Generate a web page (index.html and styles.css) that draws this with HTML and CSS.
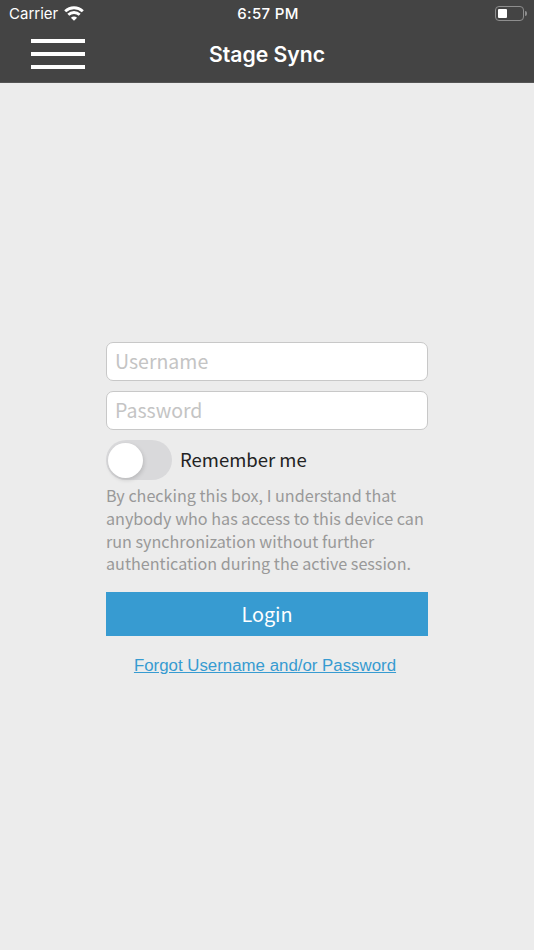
FILE: index.html
```html
<!DOCTYPE html>
<html lang="en">
<head>
    <meta charset="UTF-8">
    <meta name="viewport" content="width=device-width, initial-scale=1">
    <title>Stage Sync</title>
    <link rel="stylesheet" href="styles.css">
</head>
<body>
<header>
    <div class="status-bar">
        <div class="carrier">
            <span>Carrier</span>
            <svg class="wifi" width="20" height="15" viewBox="0 0 20 15" fill="none" stroke="#fff" stroke-width="2.9">
                <path d="M1.2 5.2C6.2 .6 13.8 .6 18.8 5.2"/>
                <path d="M4.3 8.8C7.6 5.8 12.4 5.8 15.7 8.8"/>
                <path d="M10 14.8L6.9 11.8Q10 9.2 13.1 11.8Z" fill="#fff" stroke="none"/>
            </svg>
        </div>
        <div class="time">6:57 PM</div>
        <div class="battery">
            <div class="battery-body"><div class="battery-level"></div></div>
            <div class="battery-tip"></div>
        </div>
    </div>
    <div class="nav-bar">
        <button class="menu-btn" aria-label="Menu">
            <span></span>
            <span></span>
            <span></span>
        </button>
        <h1>Stage Sync</h1>
    </div>
</header>

<form class="login-form">
    <input type="text" placeholder="Username">
    <input type="password" placeholder="Password">
    <label class="remember">
        <span class="switch"><span class="knob"></span></span>
        <span class="remember-text">Remember me</span>
    </label>
    <p class="notice">
        By checking this box, I understand that<br>
        anybody who has access to this device can<br>
        run synchronization without further<br>
        authentication during the active session.
    </p>
    <button type="button" class="login-btn">Login</button>
    <a class="forgot" href="#">Forgot Username and/or Password</a>
</form>
</body>
</html>
```
FILE: styles.css
```css
* {
    margin: 0;
    padding: 0;
    box-sizing: border-box;
}

body {
    height: 100vh;
    overflow: hidden;
    background: #ececec;
    font-family: "Noto Sans CJK SC", sans-serif;
}

/* header */
header {
    height: 83px;
    background: #444;
    border-bottom: 1px solid #555;
    color: #fff;
    font-family: Inter, sans-serif;
}

.status-bar {
    display: grid;
    grid-template-columns: 1fr auto 1fr;
    align-items: center;
    height: 27px;
    padding: 0 7px 0 9px;
    font-size: 15px;
}

.carrier {
    display: flex;
    align-items: center;
    gap: 6px;
}

.wifi {
    margin-top: -1px;
}

.time {
    font-weight: 500;
    letter-spacing: 0.35px;
}

.battery {
    display: flex;
    justify-content: flex-end;
    align-items: center;
    gap: 1px;
}

.battery-body {
    width: 29px;
    height: 15px;
    padding: 2px;
    border: 1px solid #8e8e8e;
    border-radius: 4px;
}

.battery-level {
    width: 9px;
    height: 9px;
    border-radius: 1px;
    background: #fff;
}

.battery-tip {
    width: 2px;
    height: 5px;
    border-radius: 0 2px 2px 0;
    background: #8e8e8e;
}

.nav-bar {
    display: grid;
    grid-template-columns: 1fr auto 1fr;
    align-items: center;
    height: 54px;
}

.menu-btn {
    display: flex;
    flex-direction: column;
    gap: 9px;
    width: 54px;
    margin-left: 31px;
    border: none;
    background: none;
}

.menu-btn span {
    width: 100%;
    height: 4px;
    background: #fff;
}

h1 {
    font-size: 21.2px;
    font-weight: 600;
}

/* login form */
.login-form {
    display: flex;
    flex-direction: column;
    width: 322px;
    margin: 259px auto 0;
}

input {
    height: 39px;
    margin-bottom: 10px;
    padding: 0 8px 2px;
    border: 1px solid #c8c8c8;
    border-radius: 7px;
    background: #fff;
    font-family: inherit;
    font-size: 19.5px;
}

input::placeholder {
    color: #c4c4c4;
}

.remember {
    display: flex;
    align-items: center;
    gap: 8px;
    height: 40px;
    color: #222;
    font-size: 18.5px;
}

.remember-text {
    padding-bottom: 2px;
}

.switch {
    width: 66px;
    height: 40px;
    padding: 3px 2px;
    border-radius: 20px;
    background: #d9d9db;
}

.knob {
    display: block;
    width: 35px;
    height: 35px;
    border-radius: 50%;
    background: #fff;
    box-shadow: 1px 2px 4px rgba(0,0,0,0.15);
}

.notice {
    margin-top: 4px;
    color: #999;
    font-size: 16.15px;
    line-height: 22.8px;
    white-space: nowrap;
}

.login-btn {
    height: 44px;
    margin-top: 17px;
    padding-bottom: 2px;
    border: none;
    background: #379bd1;
    color: #fff;
    font-family: inherit;
    font-size: 19.8px;
}

.forgot {
    align-self: center;
    margin: 20px 4px 0 0;
    color: #379bd1;
    font-family: "Liberation Sans", Arial, sans-serif;
    font-size: 16.85px;
    line-height: 20px;
}
```
